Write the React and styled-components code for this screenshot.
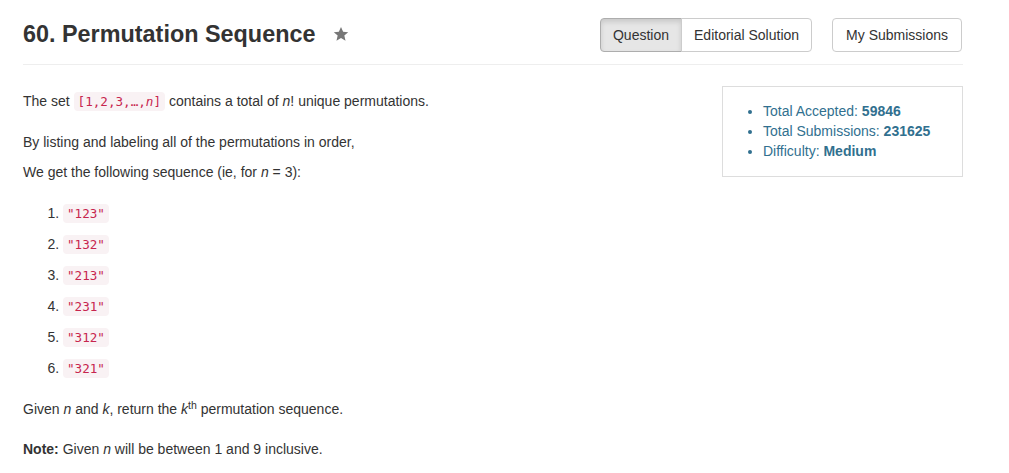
import React from "react";
import styled, { createGlobalStyle, css } from "styled-components";

const Global = createGlobalStyle`
  html, body { margin: 0; padding: 0; background: #fff; }
  body {
    font-family: "Liberation Sans", Arial, Helvetica, sans-serif;
    font-size: 14px;
    line-height: 20px;
    color: #333;
  }
  * { box-sizing: border-box; }
`;

const Page = styled.div`
  width: 940px;
  margin-left: 23px;
  padding-top: 18px;
`;

const Header = styled.div`
  display: flex;
  align-items: center;
  justify-content: space-between;
  padding-bottom: 12px;
  border-bottom: 1px solid #eee;
`;

const TitleWrap = styled.div`
  display: flex;
  align-items: center;
  gap: 18px;
  margin-bottom: 3px;
`;

const Title = styled.h1`
  margin: 0;
  font-size: 23.4px;
  line-height: 26px;
  font-weight: 700;
  color: #333;
`;

const Star = styled.svg`
  width: 16px;
  height: 16px;
  fill: #777;
  margin-top: 1px;
`;

const Actions = styled.div`
  display: flex;
  gap: 20px;
  margin-right: 1px;
`;

const Group = styled.div`
  display: flex;
`;

const Button = styled.button`
  height: 34px;
  padding: 6px ${(p) => (p.$wide ? 13 : 12)}px;
  font-family: "Liberation Sans", Arial, sans-serif;
  font-size: 14px;
  line-height: 20px;
  color: #333;
  background: #fff;
  border: 1px solid #ccc;
  border-radius: 4px;
  cursor: pointer;
  ${(p) =>
    p.$active &&
    css`
      background: #e6e6e6;
      border-color: #adadad;
      box-shadow: inset 0 3px 5px rgba(0, 0, 0, 0.125);
    `}
  ${(p) =>
    p.$pos === "left" &&
    css`
      border-top-right-radius: 0;
      border-bottom-right-radius: 0;
    `}
  ${(p) =>
    p.$pos === "right" &&
    css`
      border-top-left-radius: 0;
      border-bottom-left-radius: 0;
      margin-left: -1px;
    `}
`;

const Content = styled.div`
  display: flex;
  align-items: flex-start;
  margin-top: 21px;
`;

const Description = styled.div`
  flex: 1;
  padding-top: 5px;
`;

const P = styled.p`
  margin: 0 0 ${(p) => p.$gap || 10}px;
  line-height: 20px;
`;

const Code = styled.code`
  font-family: "DejaVu Sans Mono", Menlo, monospace;
  font-size: 12.6px;
  padding: 2px 4px;
  color: #c7254e;
  background: #f9f2f4;
  border-radius: 4px;
`;

const List = styled.ol`
  margin: 0 0 20px;
  padding-left: 40px;
`;

const Item = styled.li`
  line-height: 20px;
  margin-bottom: 10px;
  &:last-child { margin-bottom: 0; }
`;

const Sup = styled.sup`
  font-size: 75%;
  line-height: 0;
  position: relative;
  vertical-align: baseline;
  top: -0.5em;
`;

const Stats = styled.ul`
  width: 241px;
  margin: 0;
  padding: 14px 0 15px 40px;
  border: 1px solid #ddd;
  color: #31708f;
  line-height: 20px;
`;

const Stat = styled.li``;

const perms = ["123", "132", "213", "231", "312", "321"];

export default function App() {
  return (
    <>
      <Global />
      <Page>
        <Header>
          <TitleWrap>
            <Title>60. Permutation Sequence</Title>
            <Star viewBox="0 0 24 24">
              <path d="M12 1.5l3.2 7.1 7.6.7-5.8 5.1 1.8 7.6L12 18l-6.8 4 1.8-7.6-5.8-5.1 7.6-.7z" />
            </Star>
          </TitleWrap>
          <Actions>
            <Group>
              <Button $active $pos="left">Question</Button>
              <Button $pos="right">Editorial Solution</Button>
            </Group>
            <Button $wide>My Submissions</Button>
          </Actions>
        </Header>
        <Content>
          <Description>
            <P $gap={20}>
              The set <Code>[1,2,3,…,<i>n</i>]</Code> contains a total of <i>n</i>! unique permutations.
            </P>
            <P>By listing and labeling all of the permutations in order,</P>
            <P $gap={21}>
              We get the following sequence (ie, for <i>n</i> = 3):
            </P>
            <List>
              {perms.map((p) => (
                <Item key={p}>
                  <Code>"{p}"</Code>
                </Item>
              ))}
            </List>
            <P $gap={20}>
              Given <i>n</i> and <i>k</i>, return the <i>k</i>
              <Sup>th</Sup> permutation sequence.
            </P>
            <P>
              <b>Note:</b> Given <i>n</i> will be between 1 and 9 inclusive.
            </P>
          </Description>
          <Stats>
            <Stat>
              Total Accepted: <b>59846</b>
            </Stat>
            <Stat>
              Total Submissions: <b>231625</b>
            </Stat>
            <Stat>
              Difficulty: <b>Medium</b>
            </Stat>
          </Stats>
        </Content>
      </Page>
    </>
  );
}
